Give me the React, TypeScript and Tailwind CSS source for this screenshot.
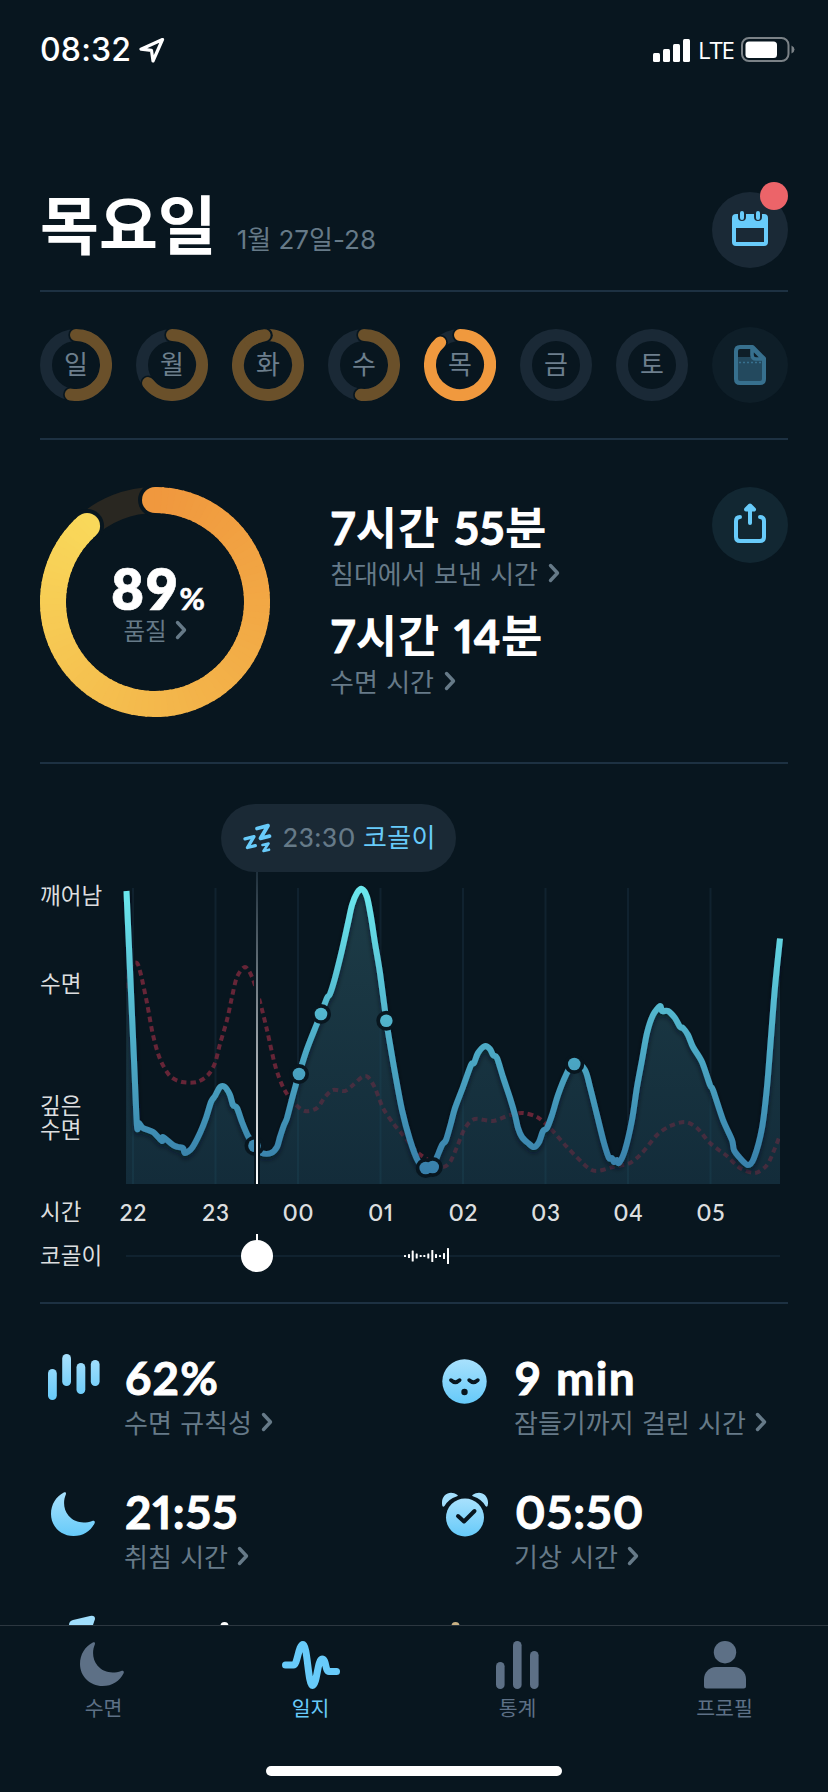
import type { ReactNode } from "react";

type Point = [number, number];

// rounded display face used for all the figures
const NUM = "font-['Lato','Noto_Sans_CJK_KR',sans-serif] proportional-nums";

// ── Data ──

const days = [
  { label: "일", value: 0.528 },
  { label: "월", value: 0.647 },
  { label: "화", value: 0.982 },
  { label: "수", value: 0.517 },
  { label: "목", value: 0.885, selected: true },
  { label: "금", value: 0 },
  { label: "토", value: 0 },
];

const hours = ["22", "23", "00", "01", "02", "03", "04", "05"];

const sleep: Point[] = [
  [126.5, 891], [134, 1060], [137, 1126], [139, 1123], [143, 1128], [153, 1132], [162, 1141], [163, 1137],
  [173, 1145], [178, 1147], [183, 1148], [185, 1153], [192, 1148], [200, 1133], [206, 1118], [211, 1102],
  [215, 1096], [220, 1087], [225, 1087], [230, 1095], [233, 1105], [237, 1108], [242, 1122], [248, 1136],
  [255, 1146], [262, 1153], [271, 1153], [277, 1147], [280, 1137], [284, 1125], [287, 1118], [293, 1095],
  [299, 1074], [307, 1049], [316, 1026], [321, 1014], [327, 998], [330, 994], [335, 978], [342, 950],
  [348, 923], [352, 905], [357, 893], [362, 889], [367, 897], [371, 917], [375, 943], [380, 973],
  [386.3, 1020.7], [390, 1044], [395, 1073], [402, 1110], [410, 1140], [418, 1161], [425.7, 1168], [432.7, 1167],
  [437, 1157], [442, 1145], [446, 1140], [451, 1123], [455, 1108], [463, 1087], [471, 1065], [474, 1063],
  [478, 1053], [485, 1046], [490, 1049], [493, 1055], [497, 1058], [503, 1077], [510, 1098], [515, 1115],
  [518, 1128], [522, 1137], [528, 1143], [534, 1147], [539, 1142], [543, 1131], [547, 1128], [552, 1115],
  [558, 1095], [566, 1075], [574.3, 1061], [585, 1070], [590, 1087], [597, 1115], [604, 1143], [609, 1158],
  [612, 1158], [614, 1162], [617, 1160], [619, 1163], [625, 1150], [632, 1120], [637, 1087], [642, 1060],
  [647, 1033], [653, 1015], [660, 1006], [662, 1011], [668, 1011], [675, 1018], [680, 1027], [683, 1028],
  [688, 1035], [693, 1047], [702, 1062], [710, 1085], [713, 1090], [723, 1120], [732, 1140], [734, 1150],
  [740, 1158], [748, 1165], [754, 1158], [762, 1128], [767, 1087], [771, 1037], [775, 987], [780, 938.5],
];

const average: Point[] = [
  [126, 988], [131, 966], [137, 963], [141, 975], [147, 1003], [153, 1035], [160, 1059], [170, 1076],
  [182, 1082], [197, 1082], [208, 1075], [215, 1063], [220, 1044], [227, 1020], [232, 997], [237, 977],
  [245, 967], [252, 977], [260, 1002], [267, 1030], [275, 1065], [283, 1087], [293, 1102], [305, 1111],
  [317, 1108], [325, 1097], [333, 1090], [345, 1091], [353, 1085], [362, 1077], [368, 1077], [375, 1088],
  [383, 1108], [393, 1123], [403, 1135], [415, 1150], [425, 1158], [442, 1167], [450, 1162], [457, 1147],
  [465, 1128], [475, 1119], [493, 1121], [510, 1115], [523, 1113], [537, 1117], [550, 1128], [567, 1147],
  [587, 1167], [597, 1171], [613, 1167], [630, 1163], [642, 1153], [657, 1135], [670, 1126], [685, 1122],
  [697, 1128], [710, 1143], [727, 1156], [740, 1168], [755, 1173], [767, 1165], [775, 1148], [780, 1135],
];

const events: Point[] = [
  [254.5, 1145.7], [299, 1074], [321, 1014], [386.3, 1020.7], [425.7, 1168], [432.7, 1167], [574.3, 1064],
];

const snoreBars: Point[] = [
  [405, 2], [409, 4], [412.7, 11], [416.7, 5], [420.7, 2], [424.3, 2],
  [428.3, 5], [432.3, 12], [436, 4], [440, 2], [444, 6], [448, 16],
];

function smooth(pts: Point[]) {
  let d = `M${pts[0][0]} ${pts[0][1]}`;
  for (let i = 0; i < pts.length - 1; i++) {
    const a = pts[i - 1] ?? pts[i];
    const b = pts[i];
    const c = pts[i + 1];
    const e = pts[i + 2] ?? c;
    d += `C${b[0] + (c[0] - a[0]) / 7} ${b[1] + (c[1] - a[1]) / 7} ${c[0] - (e[0] - b[0]) / 7} ${c[1] - (e[1] - b[1]) / 7} ${c[0]} ${c[1]}`;
  }
  return d;
}

function polar(c: number, r: number, t: number): Point {
  const a = t * Math.PI * 2 - Math.PI / 2;
  return [c + r * Math.cos(a), c + r * Math.sin(a)];
}

function arc(c: number, r: number, from: number, to: number) {
  const [x0, y0] = polar(c, r, from);
  const [x1, y1] = polar(c, r, to);
  return `M${x0} ${y0}A${r} ${r} 0 ${to - from > 0.5 ? 1 : 0} 1 ${x1} ${y1}`;
}

// ── Icons ──

function Chevron() {
  return (
    <svg width="12" height="20" viewBox="0 0 12 20" fill="none" stroke="#667a88" strokeWidth="3.4" strokeLinecap="round" strokeLinejoin="round">
      <path d="M2.5 2.5 9.5 10l-7 7.5" />
    </svg>
  );
}

function IceGradient({ id }: { id: string }) {
  return (
    <linearGradient id={id} x1="0" y1="0" x2="0" y2="1">
      <stop offset="0" stopColor="#a8e1fd" />
      <stop offset="1" stopColor="#66caf9" />
    </linearGradient>
  );
}

function MoonIcon({ fill }: { fill: string }) {
  return (
    <svg width="44" height="44" viewBox="0 0 44 44" className="mr-[3px] mb-[3px]">
      <defs><IceGradient id="ice-moon" /></defs>
      <path
        fill={fill}
        d="M12.8.5C14.5-.3 15.3.7 14.9 2.200 12 9 12.300 17.600 17.600 23.800c6 7 15.300 8.200 23.600 5.100 2-.7 3.200.4 2.400 2.300C39.800 39 32.300 44 22.500 44 9.800 44 0 34.300 0 22 0 12.500 5 4.500 12.800.5Z"
      />
    </svg>
  );
}

function RegularityIcon() {
  return (
    <svg width="52" height="46" viewBox="0 0 52 46" fill="url(#ice-bars)" className="mr-px mb-2">
      <defs>
        <linearGradient id="ice-bars" gradientUnits="userSpaceOnUse" x1="0" y1="0" x2="0" y2="46">
          <stop offset="0" stopColor="#a8e1fd" />
          <stop offset="1" stopColor="#66caf9" />
        </linearGradient>
      </defs>
      <rect x="0" y="15" width="8.800" height="31" rx="4.400" />
      <rect x="14.200" y="0" width="8.800" height="32" rx="4.400" />
      <rect x="28.500" y="9" width="8.800" height="31" rx="4.400" />
      <rect x="42.800" y="6" width="8.800" height="26" rx="4.400" />
    </svg>
  );
}

function FaceIcon() {
  return (
    <svg width="45" height="45" viewBox="0 0 45 45">
      <defs><IceGradient id="ice-face" /></defs>
      <circle cx="22.500" cy="22.500" r="22.200" fill="url(#ice-face)" />
      <path d="M9 21.200q4.300 4.200 8.600 0M27.200 21.200q4.300 4.200 8.600 0" fill="none" stroke="#08161f" strokeWidth="3.800" strokeLinecap="round" />
      <circle cx="22.500" cy="33" r="3.200" fill="#08161f" />
    </svg>
  );
}

function AlarmIcon() {
  return (
    <svg width="46" height="45" viewBox="0 0 46 45" className="mb-px">
      <defs><IceGradient id="ice-alarm" /></defs>
      <circle cx="23" cy="25.500" r="19" fill="url(#ice-alarm)" />
      <path d="M15.500 3C8-2.500-.5 2.500 0 11.500q.3 5 2.500 2.500Q6.500 7 14.500 4.500q2-.7 1-1.500ZM30.500 3C38-2.500 46.500 2.500 46 11.500q-.3 5-2.500 2.500Q39.500 7 31.500 4.500q-2-.7-1-1.500Z" fill="#a3dffd" />
      <path d="M16 24l6 5.500L32.500 19" fill="none" stroke="#08161f" strokeWidth="4" strokeLinecap="round" strokeLinejoin="round" />
    </svg>
  );
}

function PulseIcon() {
  return (
    <svg width="58" height="48" viewBox="0 0 58 48" fill="none" stroke="#68cbfa" strokeWidth="7" strokeLinecap="round" strokeLinejoin="round">
      <path d="M3.500 24h8C15.500 24 16.500 3.500 21 3.500S26 44.500 30.500 44.500 35.500 18 40 18s3 12.500 7 12.500h7.500" />
    </svg>
  );
}

function StatsIcon() {
  return (
    <svg width="43" height="48" viewBox="0 0 43 48" fill="#5d7086">
      <rect x="0" y="21" width="8.600" height="27" rx="4.300" />
      <rect x="17" y="0" width="8.600" height="48" rx="4.300" />
      <rect x="34" y="10" width="8.600" height="38" rx="4.300" />
    </svg>
  );
}

function ProfileIcon() {
  return (
    <svg width="42" height="48" viewBox="0 0 42 48" fill="#5d7086">
      <circle cx="21" cy="11.200" r="11.200" />
      <path d="M12 26h18c7 0 12 6 12 12v7q0 2.500-2.500 2.500h-37Q0 47.500 0 45v-7c0-6 5-12 12-12Z" />
    </svg>
  );
}

function ZzzIcon() {
  return (
    <svg width="30" height="30" viewBox="0 0 30 30" fill="none" stroke="#68cbfa" strokeLinecap="round" strokeLinejoin="round">
      <path d="M14 5.500 25 2.700 17.500 15.300 26.500 13.200" strokeWidth="3.800" />
      <path d="M2 15.800 11 13.600 4.500 24.500 12.300 22.600" strokeWidth="3.300" />
      <path d="M19.500 22 25.500 20.600 20.500 28 26 26.700" strokeWidth="2.700" />
    </svg>
  );
}

// ── Sections ──

function StatusBar() {
  return (
    <header className="flex h-[100px] items-center justify-between pl-10 pr-[33px] font-['Inter',sans-serif] text-white">
      <div className="flex items-center gap-2">
        <span className="text-[32px] font-medium leading-none tracking-[0.2px]">08:32</span>
        <svg width="26" height="26" viewBox="0 0 26 26" fill="none" stroke="white" strokeWidth="3.2" strokeLinejoin="round">
          <path d="M23.500 2.500 2 12.200l10.500 1.200L14 24Z" />
        </svg>
      </div>
      <div className="flex items-center gap-2">
        <svg width="37" height="23" viewBox="0 0 37 23" fill="white">
          <rect x="0" y="14" width="7" height="9" rx="1.500" />
          <rect x="10" y="10" width="7" height="13" rx="1.500" />
          <rect x="20" y="5" width="7" height="18" rx="1.500" />
          <rect x="30" y="0" width="7" height="23" rx="1.500" />
        </svg>
        <span className="w-[35px] font-['Open_Sans',sans-serif] text-[24px] font-medium leading-none tracking-[-1.1px]">LTE</span>
        <svg width="54" height="26" viewBox="0 0 54 26">
          <rect x="1" y="1" width="46.500" height="23" rx="7" fill="none" stroke="#7b8287" strokeWidth="2" />
          <rect x="4.500" y="4.500" width="31.500" height="16.500" rx="3.500" fill="white" />
          <path d="M50.500 8.500q3 1.500 3 4t-3 4Z" fill="#7b8287" />
        </svg>
      </div>
    </header>
  );
}

function TitleRow() {
  return (
    <div className="mx-10 flex h-[192px] items-end justify-between border-b-2 border-[#1d3142] pb-[22px]">
      <div className="mb-[5px] flex items-baseline gap-5">
        <h1 className="text-[64px] font-bold leading-[84px] text-white">목요일</h1>
        <span className="font-['Inter','Noto_Sans_CJK_KR',sans-serif] text-[26px] leading-none text-[#667a88]">1월 27일-28</span>
      </div>
      <button className="relative flex size-[76px] items-center justify-center rounded-full bg-[#1a2936]">
        <svg width="36" height="35" viewBox="0 0 36 35" className="mb-[3px]">
          <path fillRule="evenodd" fill="#68cbfa" d="M4 3h28q4 0 4 4v24q0 4-4 4H4q-4 0-4-4V7Q0 3 4 3ZM4 17v14h28V17Z" />
          <g strokeLinecap="round">
            <path d="M10 2v4M26 2v4" stroke="#1a2936" strokeWidth="8" />
            <path d="M10 2v5M26 2v5" stroke="#68cbfa" strokeWidth="4" />
          </g>
        </svg>
        <span className="absolute -top-2.5 right-0 size-7 rounded-full bg-[#ec6469]" />
      </button>
    </div>
  );
}

function DayRing({ label, value, selected }: { label: string; value: number; selected?: boolean }) {
  const color = selected ? "#f0993e" : "#6a502a";
  const [ex, ey] = polar(36, 30, value);
  return (
    <div className="relative size-[72px]">
      <svg width="72" height="72" viewBox="0 0 72 72" fill="none" strokeWidth="12">
        <circle cx="36" cy="36" r="30" stroke="#1a2936" />
        {value > 0 && (
          <>
            <circle cx="36" cy="6" r="7.700" fill="#08161f" stroke="none" />
            {value < 0.95 && <circle cx={ex} cy={ey} r="7.700" fill="#08161f" stroke="none" />}
            <path d={arc(36, 30, 0, value)} stroke={color} strokeLinecap="round" />
            {value > 0.95 && (
              <>
                <circle cx={ex + 1} cy={ey} r="7.200" fill="#08161f" stroke="none" />
                <path d={arc(36, 30, 0.9, value)} stroke={color} strokeLinecap="round" />
              </>
            )}
          </>
        )}
      </svg>
      <span className="absolute inset-0 flex items-center justify-center pb-1.5 text-[26px] text-[#6d7f8d]">{label}</span>
    </div>
  );
}

function WeekRow() {
  return (
    <div className="mx-10 flex h-[148px] items-center justify-between border-b-2 border-[#1d3142]">
      <div className="flex gap-6">
        {days.map((day) => <DayRing key={day.label} {...day} />)}
      </div>
      <div className="flex size-[76px] items-center justify-center rounded-full bg-[#0e1e28]">
        <svg width="32" height="40" viewBox="0 0 32 40">
          <path d="M3 12h27v25H3Z" fill="#23495e" />
          <path d="M2 6q0-4 4-4h12.500L30 13.500V34q0 4-4 4H6q-4 0-4-4Z" fill="none" stroke="#37708e" strokeWidth="4" strokeLinejoin="round" />
          <path d="M18 3v7q0 4 4 4h7Z" fill="#0e1e28" stroke="#37708e" strokeWidth="3.600" strokeLinejoin="round" />
          <path d="M5 17.500h22" stroke="#37708e" strokeWidth="1.600" strokeDasharray="2 2" />
        </svg>
      </div>
    </div>
  );
}

function QualityRing() {
  const value = 0.884;
  const steps = 90;
  const from = [240, 152, 62];
  const mid = [243, 180, 74];
  const to = [249, 216, 90];
  const [ex, ey] = polar(115, 102, value);
  const shade = (t: number) => {
    const [a, b, k] = t < 0.5 ? [from, mid, t * 2] : [mid, to, t * 2 - 1];
    return `rgb(${a.map((v, i) => Math.round(v + (b[i] - v) * k)).join(",")})`;
  };
  return (
    <div className="relative size-[230px]">
      <svg width="230" height="230" viewBox="0 0 230 230" fill="none" strokeWidth="26">
        <circle cx="115" cy="115" r="102" stroke="#292721" />
        <circle cx="115" cy="13" r="17" fill="#08161f" />
        <circle cx={ex} cy={ey} r="17" fill="#08161f" />
        <circle cx="115" cy="13" r="13" fill={shade(0)} />
        <circle cx={ex} cy={ey} r="13" fill={shade(1)} />
        {Array.from({ length: steps }, (_, i) => (
          <path
            key={i}
            d={arc(115, 102, (i / steps) * value, Math.min(value, ((i + 1.3) / steps) * value))}
            stroke={shade(i / steps)}
          />
        ))}
      </svg>
      <div className="absolute inset-0 flex flex-col items-center pt-[73px]">
        <div className={`${NUM} ml-1.5 flex h-[58px] items-baseline text-white`}>
          <span className="text-[56px] font-extrabold leading-[58px] tracking-[2px] [-webkit-text-stroke:0.6px_white]">89</span>
          <span className="text-[31px] font-bold leading-none [-webkit-text-stroke:0.6px_white]">%</span>
        </div>
        <div className="-mt-0.5 flex items-center gap-2 text-[23.5px] leading-[28px] text-[#667a88]">
          <span>품질</span>
          <Chevron />
        </div>
      </div>
    </div>
  );
}

function Duration({ hour, minute, label }: { hour: string; minute: string; label: string }) {
  return (
    <div className="h-[108px]">
      <div className={`${NUM} pt-0.5 pl-px text-[45px] font-bold leading-[54px] tracking-[0.6px] text-white [word-spacing:3px]`}>
        <span className="[-webkit-text-stroke:0.9px_white]">{hour}</span>시간{" "}
        <span className="[-webkit-text-stroke:0.9px_white]">{minute}</span>분
      </div>
      <div className="flex items-center gap-2.5 text-[26px] leading-[36px] text-[#667a88] [word-spacing:2.5px]">
        <span>{label}</span>
        <Chevron />
      </div>
    </div>
  );
}

function Summary() {
  return (
    <section className="mx-10 flex h-[324px] border-b-2 border-[#1d3142] pt-[47px]">
      <QualityRing />
      <div className="ml-[60px] flex-1 pt-3">
        <Duration hour="7" minute="55" label="침대에서 보낸 시간" />
        <Duration hour="7" minute="14" label="수면 시간" />
      </div>
      <button className="flex size-[76px] items-center justify-center rounded-full bg-[#122732]">
        <svg width="32" height="40" viewBox="0 0 32 40" fill="none" stroke="#68cbfa" strokeWidth="4" strokeLinecap="round" strokeLinejoin="round" className="-mt-1">
          <path d="M6 14q-4 0-4 4v16q0 4 4 4h20q4 0 4-4V18q0-4-4-4" />
          <path d="M16 4v16" />
          <path d="M12 6.500 16 2.500 20 6.500Z" fill="#68cbfa" />
        </svg>
      </button>
    </section>
  );
}

function SleepChart() {
  const line = smooth(sleep);
  const grid = hours.map((_, i) => `M${133 + i * 82.5} 888V1184`).join("");
  return (
    <svg width="662" height="312" viewBox="122 872 662 312" fill="none">
      <defs>
        <linearGradient id="line" gradientUnits="userSpaceOnUse" x1="0" y1="888" x2="0" y2="1172">
          <stop offset="0" stopColor="#6ce8ee" />
          <stop offset="0.45" stopColor="#52b5cd" />
          <stop offset="1" stopColor="#387faa" />
        </linearGradient>
        <linearGradient id="area" gradientUnits="userSpaceOnUse" x1="0" y1="888" x2="0" y2="1184">
          <stop offset="0" stopColor="#1d3c47" />
          <stop offset="1" stopColor="#132c3a" />
        </linearGradient>
        <linearGradient id="cursor" gradientUnits="userSpaceOnUse" x1="0" y1="872" x2="0" y2="1184">
          <stop offset="0" stopColor="#1f303c" />
          <stop offset="1" stopColor="#ffffff" />
        </linearGradient>
        <filter id="shadow" x="-5%" y="-5%" width="110%" height="110%">
          <feDropShadow dx="0" dy="3" stdDeviation="2.500" floodColor="#04101a" floodOpacity="0.6" />
        </filter>
        <clipPath id="above">
          <path d={`${line}V880H126Z`} />
        </clipPath>
        <clipPath id="below">
          <path d={`${line}V1184H126Z`} />
        </clipPath>
      </defs>
      <path d={grid} stroke="#10222f" strokeWidth="2" />
      <path d={`${line}V1184H126Z`} fill="url(#area)" />
      <path d={grid} stroke="#1b4355" strokeOpacity="0.4" strokeWidth="2" clipPath="url(#below)" />
      <path d={smooth(average)} stroke="#a02c44" strokeOpacity="0.35" strokeWidth="4" strokeDasharray="5.500 4" clipPath="url(#below)" />
      <path d={smooth(average)} stroke="#662537" strokeWidth="4" strokeDasharray="5.500 4" clipPath="url(#above)" />
      <path d={line} stroke="url(#line)" strokeWidth="6" strokeLinejoin="round" filter="url(#shadow)" />
      {events.map(([x, y]) => <circle key={x} cx={x} cy={y} r="10" fill="#08161f" />)}
      {events.map(([x, y]) => <circle key={x} cx={x} cy={y} r="6.300" fill="url(#line)" />)}
      <path d="M257 960V1184" stroke="#08161f" strokeWidth="6" />
      <path d="M256 872h2v312h-2Z" fill="url(#cursor)" />
    </svg>
  );
}

function AxisLabel({ children }: { children: ReactNode }) {
  return <div className="text-[22.500px] leading-6 text-[#dcdedf]">{children}</div>;
}

function NightSection() {
  return (
    <section className="mx-10 h-[540px] border-b-2 border-[#1d3142] pt-10">
      <div className="ml-[181px] flex h-[68px] w-[235px] items-center rounded-full bg-[#1a2935] pl-[22px] text-[26px]">
        <ZzzIcon />
        <span className={`${NUM} mb-0.5 ml-2.5 font-medium tracking-[0.9px] text-[#667a88]`}>23:30</span>
        <span className="mb-1.5 ml-[7px] tracking-[0.3px] text-[#68cbfa]">코골이</span>
      </div>
      <div className="flex h-[312px]">
        <div className="w-[82px] pt-2.5">
          <AxisLabel>깨어남</AxisLabel>
          <div className="mt-[64px]"><AxisLabel>수면</AxisLabel></div>
          <div className="mt-[98px]"><AxisLabel>깊은<br />수면</AxisLabel></div>
        </div>
        <SleepChart />
      </div>
      <div className="flex h-[54px] items-center">
        <div className="mb-0.5 w-[72px]"><AxisLabel>시간</AxisLabel></div>
        <div className={`${NUM} flex pt-[3px] text-[22.500px] font-semibold tracking-[0.8px] text-[#dcdedf]`}>
          {hours.map((h) => (
            <span key={h} className="flex w-[82.500px]">
              <span className="w-[43px] text-center">{h}</span>
            </span>
          ))}
        </div>
      </div>
      <div className="flex h-9 items-center">
        <div className="mb-1 w-[82px]"><AxisLabel>코골이</AxisLabel></div>
        <svg width="662" height="44" viewBox="122 1234 662 44">
          <path d="M126 1256H780" stroke="#10222f" strokeWidth="2" />
          <path d="M257 1234v8" stroke="white" strokeWidth="2" />
          <circle cx="257" cy="1256" r="16" fill="white" />
          {snoreBars.map(([x, h]) => (
            <rect key={x} x={x - 1} y={1256 - h / 2} width="2" height={h} rx="0.5" fill="white" />
          ))}
        </svg>
      </div>
    </section>
  );
}

function Stat({ icon, value, label }: { icon: ReactNode; value: string; label: string }) {
  return (
    <div className="flex h-[134px]">
      <div className="flex h-[60px] w-[77px] items-center justify-center pr-2">{icon}</div>
      <div className="ml-[7px]">
        <div className={`${NUM} mb-px pl-px text-[46px] font-bold leading-[54px] tracking-[1.2px] text-white [-webkit-text-stroke:0.9px_white] [word-spacing:2px]`}>
          {value}
        </div>
        <div className="flex items-center gap-[9px] text-[26px] leading-[32px] text-[#667a88] [word-spacing:2.5px]">
          <span className="whitespace-nowrap">{label}</span>
          <Chevron />
        </div>
      </div>
    </div>
  );
}

function StatGrid() {
  return (
    <section className="h-[321px] overflow-hidden pl-10 pt-[47px]">
      <div className="grid grid-cols-[390px_1fr]">
        <Stat icon={<RegularityIcon />} value="62%" label="수면 규칙성" />
        <Stat icon={<FaceIcon />} value="9 min" label="잠들기까지 걸린 시간" />
        <Stat icon={<MoonIcon fill="url(#ice-moon)" />} value="21:55" label="취침 시간" />
        <Stat icon={<AlarmIcon />} value="05:50" label="기상 시간" />
      </div>
      {/* top edge of the next row, cut off by the tab bar */}
      <svg width="440" height="10" viewBox="40 1615 440 10" className="-mt-1">
        <path d="M69 1625q0-4 4-5l17-4q5-1 5 3l-2 6Z" fill="#a0defc" />
        <circle cx="224.500" cy="1626" r="4" fill="white" />
        <circle cx="455.500" cy="1626" r="4" fill="#c9b184" />
      </svg>
    </section>
  );
}

function TabBar() {
  const tabs = [
    { label: "수면", icon: <MoonIcon fill="#5d7086" /> },
    { label: "일지", icon: <PulseIcon />, active: true },
    { label: "통계", icon: <StatsIcon /> },
    { label: "프로필", icon: <ProfileIcon /> },
  ];
  return (
    <nav className="h-[167px] border-t border-[#2c3740]">
      <div className="flex h-[140px] pt-[15px]">
        {tabs.map((tab) => (
          <div key={tab.label} className="flex w-[207px] flex-col items-center">
            <div className="flex h-12 items-end">{tab.icon}</div>
            <span className={`mt-[3px] text-[20.5px] leading-[30px] ${tab.active ? "text-[#68cbfa]" : "text-[#5d7086]"}`}>{tab.label}</span>
          </div>
        ))}
      </div>
      <div className="mx-auto h-2.5 w-[296px] rounded-full bg-white" />
    </nav>
  );
}

export default function App() {
  return (
    <div className="h-[1792px] w-[828px] overflow-hidden bg-[#08161f] font-['Noto_Sans_CJK_KR',sans-serif]">
      <StatusBar />
      <TitleRow />
      <WeekRow />
      <Summary />
      <NightSection />
      <StatGrid />
      <TabBar />
    </div>
  );
}
